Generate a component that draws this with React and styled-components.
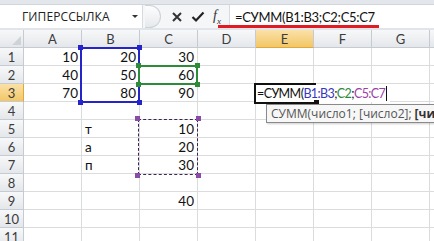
import React from 'react'
import styled, { createGlobalStyle } from 'styled-components'

const GlobalStyle = createGlobalStyle`
  html, body { margin: 0; padding: 0; background: #fff; }
  body { width: 434px; height: 241px; overflow: hidden; font-family: "Lato", "Liberation Sans", sans-serif; }
`

const COLS = ['A', 'B', 'C', 'D', 'E', 'F', 'G', '']
const ROWS = 11

const data = {
  'A1': '10', 'B1': '20', 'C1': '30',
  'A2': '40', 'B2': '50', 'C2': '60',
  'A3': '70', 'B3': '80', 'C3': '90',
  'B5': 'т', 'B6': 'а', 'B7': 'п',
  'C5': '10', 'C6': '20', 'C7': '30',
  'C9': '40',
}

const textCells = ['B5', 'B6', 'B7']

export default function App() {
  return (
    <Page>
      <GlobalStyle />
      <TopStrip />
      <FormulaBar>
        <NameBox>
          <NameText>ГИПЕРССЫЛКА</NameText>
          <DropArrow />
        </NameBox>
        <Grip />
        <Buttons>
          <svg width="12" height="12" viewBox="0 0 12 12">
            <path d="M2 2 L10 10 M10 2 L2 10" stroke="#333" strokeWidth="2" />
          </svg>
          <svg width="14" height="12" viewBox="0 0 14 12">
            <path d="M1.5 6 L5 9.5 L12.5 1.5" stroke="#222" strokeWidth="2.2" fill="none" />
          </svg>
          <Fx>f<sub>x</sub></Fx>
        </Buttons>
        <FormulaInput>
          <FormulaText>=СУММ(B1:B3;C2;C5:C7</FormulaText>
          <RedLine />
        </FormulaInput>
      </FormulaBar>

      <Sheet>
        <Grid>
          <Corner />
          {COLS.map((c, i) => (
            <ColHead key={i} $active={c === 'E'}>{c}</ColHead>
          ))}
          {Array.from({ length: ROWS }, (_, i) => i + 1).map(r => (
            <React.Fragment key={r}>
              <RowHead $active={r === 3}>{r}</RowHead>
              {COLS.map((c, i) => {
                const id = c + r
                return (
                  <Cell key={i} $left={textCells.includes(id)}>{c && data[id]}</Cell>
                )
              })}
            </React.Fragment>
          ))}
        </Grid>

        <Range $color="#2424c8" $w="2px" style={{ left: 80, top: 17, width: 60, height: 56 }}>
          <Handle $color="#2424c8" $x="tl" />
          <Handle $color="#2424c8" $x="tr" />
          <Handle $color="#2424c8" $x="bl" />
          <Handle $color="#2424c8" $x="br" />
        </Range>
        <Range $color="#2e8b3a" $w="2px" style={{ left: 138, top: 35, width: 60, height: 20 }}>
          <Handle $color="#2e8b3a" $x="tl" />
          <Handle $color="#2e8b3a" $x="tr" />
          <Handle $color="#2e8b3a" $x="bl" />
          <Handle $color="#2e8b3a" $x="br" />
        </Range>
        <Range $color="#3e2450" $w="1.5px" $dashed style={{ left: 138, top: 89, width: 60, height: 56 }}>
          <Handle $color="#8a4aa8" $x="tl" />
          <Handle $color="#8a4aa8" $x="tr" />
          <Handle $color="#8a4aa8" $x="bl" />
          <Handle $color="#8a4aa8" $x="br" />
        </Range>

        <Editor>
          <EditText>=СУММ(<Ref $c="#3535c0">B1:B3</Ref>;<Ref $c="#2e8b3a">C2</Ref>;<Ref $c="#9a3fa8">C5:C7</Ref></EditText>
          <Caret />
        </Editor>
        <ActiveBox>
          <FillHandle />
        </ActiveBox>

        <Tip>
          СУММ(число1; [число2]; <b>[число2]; ...)</b>
        </Tip>
      </Sheet>
    </Page>
  )
}

const Page = styled.div`
  width: 434px;
  height: 241px;
  overflow: hidden;
  display: flex;
  flex-direction: column;
  background: #fff;
`

const TopStrip = styled.div`
  height: 4px;
  background: #e3e7ec;
  border-bottom: 1px solid #d0d5db;
`

const FormulaBar = styled.div`
  height: 23px;
  display: flex;
  align-items: stretch;
  background: #f4f6f8;
  border-bottom: 2px solid #e1e5ea;
`

const NameBox = styled.div`
  width: 143px;
  display: flex;
  align-items: center;
  background: #fff;
  border-right: 1px solid #d6dbe0;
  padding-left: 22px;
  box-sizing: border-box;
`

const NameText = styled.span`
  font-family: "Open Sans", "Liberation Sans", sans-serif;
  font-size: 12px;
  color: #222;
  letter-spacing: 0.1px;
  flex: 1;
`

const DropArrow = styled.span`
  width: 0;
  height: 0;
  border-left: 3px solid transparent;
  border-right: 3px solid transparent;
  border-top: 3px solid #333;
  margin-right: 4px;
`

const Grip = styled.div`
  width: 16px;
  height: 23px;
  margin-left: 2px;
  border-radius: 0 12px 12px 0;
  border: 1px solid #cdd2d8;
  border-left: none;
  background: linear-gradient(#fdfdfd, #e6e9ec);
  box-sizing: border-box;
`

const Buttons = styled.div`
  display: flex;
  align-items: center;
  gap: 8px;
  padding-left: 10px;
  width: 68px;
  box-sizing: border-box;
`

const Fx = styled.span`
  font-family: "Liberation Serif", serif;
  font-style: italic;
  font-size: 14px;
  color: #333;
  sub { font-size: 9px; }
`

const FormulaInput = styled.div`
  flex: 1;
  position: relative;
  background: #fff;
  display: flex;
  align-items: center;
  padding-left: 5px;
  border-left: 1px solid #d6dbe0;
`

const FormulaText = styled.span`
  font-size: 13px;
  letter-spacing: -0.3px;
  color: #111;
`

const RedLine = styled.div`
  position: absolute;
  left: -12px;
  top: 20px;
  width: 161px;
  height: 3px;
  background: #e21b23;
`

const Sheet = styled.div`
  position: relative;
  flex: 1;
  overflow: hidden;
`

const Grid = styled.div`
  display: grid;
  grid-template-columns: 24px repeat(7, 58px) 58px;
  grid-auto-rows: 18px;
  font-size: 13.5px;
  color: #111;
`

const headBg = `linear-gradient(#f7f8f9, #e4e7eb)`
const activeBg = `linear-gradient(#fbe1a8, #f2c766)`

const Corner = styled.div`
  background: ${headBg};
  border-right: 1px solid #c6cbd1;
  border-bottom: 1px solid #c6cbd1;
  box-sizing: border-box;
  position: relative;
  &::after {
    content: '';
    position: absolute;
    right: 2px;
    bottom: 2px;
    border-left: 9px solid transparent;
    border-bottom: 9px solid #cfd3d8;
  }
`

const ColHead = styled.div`
  background: ${p => (p.$active ? activeBg : headBg)};
  border-right: 1px solid #c6cbd1;
  border-bottom: 1px solid ${p => (p.$active ? '#e0a83a' : '#c6cbd1')};
  box-sizing: border-box;
  display: flex;
  align-items: center;
  justify-content: center;
  font-size: 13px;
  color: #3c3c3c;
`

const RowHead = styled.div`
  background: ${p => (p.$active ? activeBg : headBg)};
  border-right: 1px solid ${p => (p.$active ? '#e0a83a' : '#c6cbd1')};
  border-bottom: 1px solid #c6cbd1;
  box-sizing: border-box;
  display: flex;
  align-items: center;
  justify-content: center;
  font-size: 13px;
  color: #3c3c3c;
`

const Cell = styled.div`
  border-right: 1px solid #dadcdd;
  border-bottom: 1px solid #dadcdd;
  box-sizing: border-box;
  display: flex;
  align-items: center;
  justify-content: ${p => (p.$left ? 'flex-start' : 'flex-end')};
  padding: 1px 3px 0 3px;
  white-space: nowrap;
`

const Range = styled.div`
  position: absolute;
  box-sizing: border-box;
  border: ${p => p.$w} ${p => (p.$dashed ? 'dashed' : 'solid')} ${p => p.$color};
`

const handlePos = {
  tl: 'left: -4px; top: -4px;',
  tr: 'right: -4px; top: -4px;',
  bl: 'left: -4px; bottom: -4px;',
  br: 'right: -4px; bottom: -4px;',
}

const Handle = styled.span`
  position: absolute;
  width: 5px;
  height: 5px;
  background: ${p => p.$color};
  ${p => handlePos[p.$x]}
`

const Editor = styled.div`
  position: absolute;
  left: 255px;
  top: 54px;
  height: 18px;
  padding: 0 3px 0 2px;
  background: #fff;
  display: flex;
  align-items: center;
  box-sizing: border-box;
`

const EditText = styled.span`
  font-size: 12.5px;
  letter-spacing: -0.6px;
  color: #111;
  white-space: nowrap;
`

const Ref = styled.span`
  color: ${p => p.$c};
`

const Caret = styled.span`
  width: 1px;
  height: 15px;
  background: #111;
  margin-left: 1px;
`

const ActiveBox = styled.div`
  position: absolute;
  left: 254px;
  top: 53px;
  width: 62px;
  height: 21px;
  border: 2px solid #111;
  border-right: none;
  box-sizing: border-box;
`

const FillHandle = styled.span`
  position: absolute;
  left: 58px;
  bottom: -3px;
  width: 5px;
  height: 5px;
  background: #111;
`

const Tip = styled.div`
  position: absolute;
  left: 266px;
  top: 74px;
  height: 17px;
  padding: 0 4px;
  background: #f7f7f7;
  border: 1px solid #8a8a8a;
  box-shadow: 1px 1px 2px rgba(0, 0, 0, 0.2);
  font-family: "Open Sans", "Liberation Sans", sans-serif;
  font-size: 12px;
  color: #555;
  white-space: nowrap;
  display: flex;
  align-items: center;
  b { color: #333; margin-left: 3px; }
`
